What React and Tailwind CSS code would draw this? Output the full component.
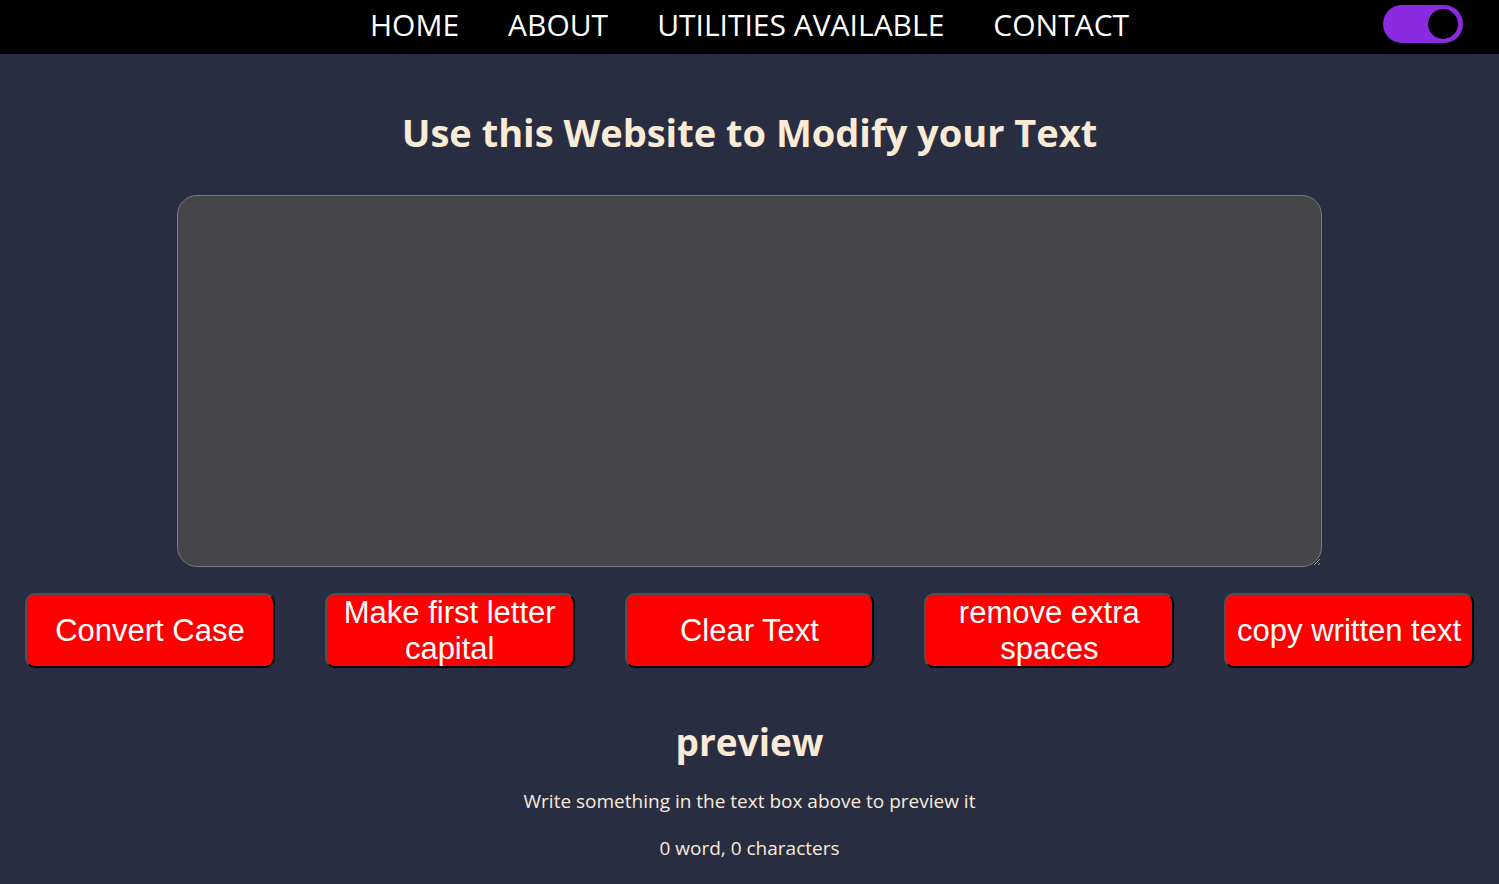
import React from "react";

const seg = { fontFamily: '"Open Sans", "Noto Sans", sans-serif' };

export default function App() {
  const buttons = [
    "Convert Case",
    "Make first letter capital",
    "Clear Text",
    "remove extra spaces",
    "copy written text",
  ];
  return (
    <div className="min-h-[884px] w-full bg-[#292d42]" style={seg}>
      <nav className="relative flex h-[54px] items-center justify-center bg-black">
        <ul className="flex items-center gap-[49px] pb-[5px] text-[30px] font-medium text-white">
          <li>HOME</li>
          <li>ABOUT</li>
          <li>UTILITIES AVAILABLE</li>
          <li>CONTACT</li>
        </ul>
        <div className="absolute right-[36px] top-[5px] flex h-[38px] w-[80px] items-center justify-end rounded-full bg-[#8a2be2] p-[2px]">
          <div className="h-[36px] w-[36px] rounded-full border-[3px] border-[#8a2be2] bg-black" />
        </div>
      </nav>
      <h1 className="mt-[59px] text-center text-[38px] font-bold leading-[1] text-[#faebd7]">
        Use this Website to Modify your Text
      </h1>
      <div className="mt-[44px] flex justify-center">
        <textarea className="h-[372px] w-[1145px] rounded-[20px] border border-[#7a7a80] bg-[#464549] outline-none" />
      </div>
      <div className="mt-[26px] flex justify-center">
        {buttons.map((b) => (
          <button
            key={b}
            className="mx-[25px] flex h-[75px] w-[250px] items-center justify-center rounded-[10px] border-2 border-t-[#505050] border-l-[#505050] border-b-black border-r-black bg-[#ff0000] px-1 text-[31px] leading-[36px] text-white"
            style={{ fontFamily: '"Liberation Sans", Arial, sans-serif' }}
          >
            {b}
          </button>
        ))}
      </div>
      <h2 className="mt-[55px] text-center text-[37px] font-bold leading-[1] text-[#faebd7]">
        preview
      </h2>
      <p className="mt-[28px] text-center text-[19px] leading-[26px] text-[#faebd7]">
        Write something in the text box above to preview it
      </p>
      <p className="mt-[21px] text-center text-[19px] leading-[26px] text-[#faebd7]">
        0 word, 0 characters
      </p>
    </div>
  );
}
